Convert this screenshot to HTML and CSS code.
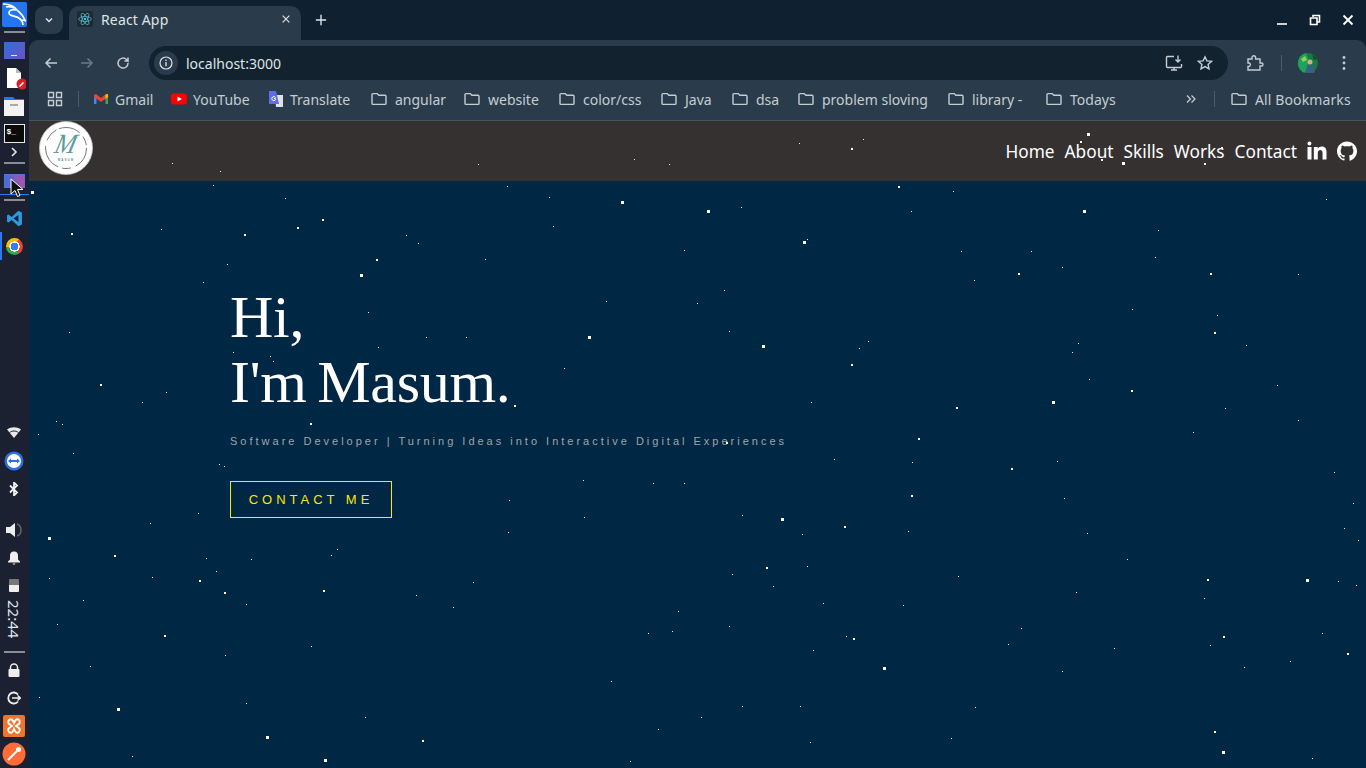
FILE: index.html
```html
<!DOCTYPE html>
<html lang="en">
<head>
<meta charset="utf-8">
<title>React App</title>
<link rel="stylesheet" href="styles.css">
</head>
<body>
<svg class="sprites" aria-hidden="true">
  <symbol id="folder" viewBox="0 0 16 16"><path d="M1 3.600c0-.6.4-1 1-1h4.200l1.600 1.700H14c.6 0 1 .4 1 1v7.100c0 .6-.4 1-1 1H2c-.6 0-1-.4-1-1z" fill="none" stroke="#c5ccd2" stroke-width="1.400"/></symbol>
</svg>
<div class="screen">
  <aside class="dock">
    <div class="dock-group">
      <div class="dock-item"><svg class="i25" viewBox="0 0 25 25"><rect width="25" height="25" rx="2" fill="#2277f0"/><path d="M1 2c6 0 11 2 14 6 3 3 6 5 8 10M15 8c-4-1-8 0-8 3 0 4 9 2 12 7 1 1 2 3 2 5M4 5c3-1 6 0 8 1M19 18c1 0 3 0 5 1" fill="none" stroke="#fff" stroke-width="1.700"/></svg></div>
      <div class="dock-sep"></div>
      <div class="dock-item"><span class="tile-blue"><i></i></span></div>
      <div class="dock-item"><svg class="i24" viewBox="0 0 24 24"><path d="M5 2h9l5 5v15H5z" fill="#fff"/><path d="M14 2l5 5h-5z" fill="#bbb"/><circle cx="20" cy="18" r="5.500" fill="#d81f26"/><path d="M17.500 20.500l4-4" stroke="#fff" stroke-width="1.600"/></svg></div>
      <div class="dock-item"><svg class="i24" viewBox="0 0 24 24"><path d="M2 3h9l2 2h9v4H2z" fill="#1f78e6"/><rect x="2" y="6" width="20" height="16" fill="#f2f2f2"/><rect x="8" y="10" width="8" height="2" fill="#aaa"/></svg></div>
      <div class="dock-item dock-term"><span class="term">$_</span></div>
      <div class="dock-item dock-chev"><svg class="i12" viewBox="0 0 12 12"><path d="M4 2l4 4-4 4" fill="none" stroke="#e8e8e8" stroke-width="1.600"/></svg></div>
      <div class="dock-sep dock-sep-b"></div>
      <div class="dock-item dock-win"><span class="tile-win"></span>
        <svg class="cursor" viewBox="0 0 14 20"><path d="M1 1v15l4-3.500 2.500 6 2.500-1-2.500-6H13z" fill="#111" stroke="#fff"/></svg>
      </div>
      <div class="dock-sep dock-sep-c"></div>
      <div class="dock-item"><svg class="i16" viewBox="0 0 24 24"><path d="M17.500 1L8 10 3.500 6.500 1.500 7.500v9l2 1L8 14l9.500 9 5-2.500v-17zM17.500 7v10L10.500 12z" fill="#2a9be0"/></svg></div>
      <div class="dock-item dock-active"><span class="chrome"></span></div>
    </div>
    <div class="dock-group">
      <div class="dock-item dock-wifi"><svg class="i14" viewBox="0 0 14 14"><path d="M0 3.500C4 .5 10 .5 14 3.500L7 12z" fill="#e8e8e8"/><path d="M2.500 6.500c3-2 6-2 9 0" stroke="#1c2230" fill="none"/></svg></div>
      <div class="dock-item"><svg class="i20" viewBox="0 0 20 20"><circle cx="10" cy="10" r="9.500" fill="#2f6fe0"/><circle cx="10" cy="10" r="7" fill="#fff"/><path d="M4 10l3-2.500V9h6V7.500L16 10l-3 2.500V11H7v1.500z" fill="#2f6fe0"/></svg></div>
      <div class="dock-item"><svg class="i14" viewBox="0 0 14 14"><path d="M3 3.500l7 7L7 13.500V.500l3 3-7 7" fill="none" stroke="#eee" stroke-width="1.800"/></svg></div>
      <div class="dock-item dock-gap"><svg class="i18" viewBox="0 0 18 18"><path d="M1 6h4l5-4v14l-5-4H1z" fill="#eee"/><path d="M12 3c3 1 4 3.500 4 6s-1 5-4 6" fill="none" stroke="#666" stroke-width="1.500"/></svg></div>
      <div class="dock-item"><svg class="i14" viewBox="0 0 14 14"><path d="M7 .5c-3 0-4 2-4 4v4l-2 2v1h12v-1l-2-2v-4c0-2-1-4-4-4zM5.500 12.500h3L7 14z" fill="#eee"/></svg></div>
      <div class="dock-item dock-batt"><span class="battery"></span></div>
      <div class="clock">22:44</div>
      <div class="dock-sep"></div>
      <div class="dock-item"><svg class="i14" viewBox="0 0 14 14"><path d="M3.500 6V4.500a3.500 3.500 0 0 1 7 0V6" fill="none" stroke="#eee" stroke-width="1.500"/><rect x="1.500" y="6" width="11" height="8" rx="1" fill="#eee"/></svg></div>
      <div class="dock-item"><svg class="i14" viewBox="0 0 14 14"><path d="M11 3.500A5.500 5.500 0 1 0 11 10.500" fill="none" stroke="#eee" stroke-width="1.800"/><path d="M5 7h8M10.500 4.500L13.500 7l-3 2.500" fill="none" stroke="#eee" stroke-width="1.500"/></svg></div>
      <div class="dock-item"><svg class="i24" viewBox="0 0 24 24"><rect x="1" y="1" width="22" height="22" rx="2" fill="#f0752a"/><path d="M7 6c3-2 4 1 5 3 1-2 2-5 5-3 3 3-2 5-3 6 1 1 6 3 3 6-3 2-4-1-5-3-1 2-2 5-5 3-3-3 2-5 3-6-1-1-6-3-3-6z" fill="none" stroke="#fff" stroke-width="2"/></svg></div>
      <div class="dock-item"><svg class="i24" viewBox="0 0 24 24"><circle cx="12" cy="12" r="11.500" fill="#ff6c37"/><path d="M6 18l9-9" stroke="#fff" stroke-width="2"/><circle cx="16.500" cy="7.500" r="2.500" fill="#fff"/></svg></div>
    </div>
  </aside>

  <div class="browser">
    <div class="tabstrip">
      <button class="tab-menu"><svg class="i12" viewBox="0 0 12 12"><path d="M3 4.500l3 3 3-3" fill="none" stroke="#dfe4e8" stroke-width="1.500"/></svg></button>
      <div class="tab">
        <span class="react-tile"><svg class="i14" viewBox="-12 -12 24 24"><g fill="none" stroke="#58c4dc" stroke-width="1.200"><ellipse rx="11" ry="4.200"/><ellipse rx="11" ry="4.200" transform="rotate(60)"/><ellipse rx="11" ry="4.200" transform="rotate(120)"/></g><circle r="2" fill="#58c4dc"/></svg></span>
        <span class="tab-title">React App</span>
        <svg class="tab-x" viewBox="0 0 12 12"><path d="M2 2l8 8M10 2l-8 8" stroke="#dfe4e8" stroke-width="1.400"/></svg>
      </div>
      <svg class="tab-plus" viewBox="0 0 14 14"><path d="M7 1v12M1 7h12" stroke="#dfe4e8" stroke-width="1.600"/></svg>
      <div class="win-controls">
        <svg class="i12" viewBox="0 0 12 12"><path d="M1 10h10" stroke="#fff" stroke-width="1.600"/></svg>
        <svg class="i12" viewBox="0 0 12 12"><path d="M4 3V1.500h6.500V8H8.500M1.500 4H8v6.500H1.500z" fill="none" stroke="#fff" stroke-width="1.600"/></svg>
        <svg class="i12" viewBox="0 0 12 12"><path d="M1.500 1.500l9 9M10.500 1.500l-9 9" stroke="#fff" stroke-width="1.800"/></svg>
      </div>
    </div>

    <div class="toolbar">
      <svg class="tool-ic" viewBox="0 0 16 16"><path d="M14 8H3M7.500 3.500L3 8l4.500 4.500" fill="none" stroke="#c5ccd2" stroke-width="1.500"/></svg>
      <svg class="tool-ic tool-dim" viewBox="0 0 16 16"><path d="M2 8h11M8.500 3.500L13 8l-4.500 4.500" fill="none" stroke="#6b7a87" stroke-width="1.500"/></svg>
      <svg class="tool-ic" viewBox="0 0 16 16"><path d="M13 8a5 5 0 1 1-1.500-3.500L13 6V2.500M13 6H9.500" fill="none" stroke="#c5ccd2" stroke-width="1.500"/></svg>
      <div class="omnibox">
        <span class="site-info"><svg class="i14" viewBox="0 0 14 14"><circle cx="7" cy="7" r="6" fill="none" stroke="#dfe4e8" stroke-width="1.200"/><path d="M7 6v4.200M7 3.600v1.400" stroke="#dfe4e8" stroke-width="1.300"/></svg></span>
        <span class="url">localhost:3000</span>
        <svg class="omni-ic" viewBox="0 0 18 18"><path d="M9 2.500H2.500a1 1 0 0 0-1 1v9a1 1 0 0 0 1 1h13a1 1 0 0 0 1-1V10M6 16h6M9 13.500V16" fill="none" stroke="#c5ccd2" stroke-width="1.400"/><path d="M13 1.500V8M10.500 5.500L13 8l2.500-2.500" fill="none" stroke="#c5ccd2" stroke-width="1.400"/></svg>
        <svg class="omni-ic omni-star" viewBox="0 0 16 16"><path d="M8 1.800l1.900 4.100 4.500.5-3.300 3 .9 4.500L8 11.600l-4 2.300.9-4.500-3.300-3 4.500-.5z" fill="none" stroke="#c5ccd2" stroke-width="1.400"/></svg>
      </div>
      <svg class="ext-ic" viewBox="0 0 18 18"><path d="M2 5h4V3.500a1.800 1.800 0 0 1 3.600 0V5h4.400v4h1.500a1.500 1.500 0 0 1 0 3H14v4H2v-3.500h1a1.800 1.800 0 0 0 0-3.500H2z" fill="none" stroke="#c5ccd2" stroke-width="1.400"/></svg>
      <span class="tool-sep"></span>
      <svg class="avatar" viewBox="0 0 20 20"><circle cx="10" cy="10" r="10" fill="#177a45"/><path d="M0 10a10 10 0 0 1 8-10l3 8-4 12a10 10 0 0 1-7-10z" fill="#1fa35a"/><path d="M3 6l4-3 2 4-4 2z" fill="#8fcf5a"/><circle cx="12" cy="9" r="2.500" fill="#c9b089"/><path d="M8 20l1-8h6l2 7a10 10 0 0 1-9 1z" fill="#3c5f86"/><path d="M14 1l5 5-3 1z" fill="#0d4a2c"/></svg>
      <svg class="menu-ic" viewBox="0 0 4 16"><circle cx="2" cy="2.500" r="1.400" fill="#c5ccd2"/><circle cx="2" cy="8" r="1.400" fill="#c5ccd2"/><circle cx="2" cy="13.500" r="1.400" fill="#c5ccd2"/></svg>
    </div>

    <div class="bookmarks">
      <svg class="apps-ic" viewBox="0 0 16 16"><path d="M1.500 1.500h5v5h-5zM9.500 1.500h5v5h-5zM1.500 9.500h5v5h-5zM9.500 9.500h5v5h-5z" fill="none" stroke="#c5ccd2" stroke-width="1.400"/></svg>
      <span class="bm-sep"></span>
      <div class="bm-grid">
        <a class="bm bm-site"><svg class="bm-ic" viewBox="0 0 16 16"><path d="M1 4v9h2.500V7z" fill="#4285f4"/><path d="M15 4v9h-2.500V7z" fill="#34a853"/><path d="M1 4l2-1 5 4 5-4 2 1v2l-7 5-7-5z" fill="#ea4335"/><path d="M12.500 3.500L15 3v3l-2.500 2z" fill="#fbbc04"/></svg>Gmail</a>
        <a class="bm bm-site"><svg class="bm-ic" viewBox="0 0 16 16"><rect y="2.500" width="16" height="11" rx="3" fill="#f00"/><path d="M6.500 5.500L11 8l-4.500 2.500z" fill="#fff"/></svg>YouTube</a>
        <a class="bm bm-site"><svg class="bm-ic" viewBox="0 0 16 16"><path d="M7 4h8v12H8z" fill="#dfe1e5"/><path d="M1 0h7l3 13H1z" fill="#5e6ee6"/><path d="M7.500 6.500a2 2 0 1 0-.2 2.500V7.500H6" fill="none" stroke="#fff" stroke-width="1"/></svg>Translate</a>
        <a class="bm"><svg class="bm-ic"><use href="#folder"/></svg>angular</a>
        <a class="bm"><svg class="bm-ic"><use href="#folder"/></svg>website</a>
        <a class="bm"><svg class="bm-ic"><use href="#folder"/></svg>color/css</a>
        <a class="bm"><svg class="bm-ic"><use href="#folder"/></svg>Java</a>
        <a class="bm"><svg class="bm-ic"><use href="#folder"/></svg>dsa</a>
        <a class="bm"><svg class="bm-ic"><use href="#folder"/></svg>problem sloving</a>
        <a class="bm"><svg class="bm-ic"><use href="#folder"/></svg>library -</a>
        <a class="bm"><svg class="bm-ic"><use href="#folder"/></svg>Todays</a>
      </div>
      <svg class="bm-more" viewBox="0 0 12 12"><path d="M2 2.500L5.500 6 2 9.500M6.500 2.500L10 6 6.500 9.500" fill="none" stroke="#c5ccd2" stroke-width="1.300"/></svg>
      <span class="bm-sep bm-sep-r"></span>
      <a class="bm bm-all"><svg class="bm-ic"><use href="#folder"/></svg>All Bookmarks</a>
    </div>

    <div class="page">
      <nav class="nav">
        <div class="logo">
          <svg class="logo-ring" viewBox="0 0 54 54"><circle cx="27" cy="27" r="26.500" fill="#fff" stroke="#c8c8c8" stroke-width=".8"/><circle cx="27" cy="27" r="20.500" fill="none" stroke="#555" stroke-width=".8" stroke-dasharray="22 5 9 4 26 6 14 3"/></svg>
          <span class="logo-m">M</span>
          <span class="logo-name">MASUM</span>
        </div>
        <div class="nav-links">
          <a class="nav-link">Home</a>
          <a class="nav-link">About</a>
          <a class="nav-link">Skills</a>
          <a class="nav-link">Works</a>
          <a class="nav-link">Contact</a>
          <svg class="nav-ic" viewBox="2.500 2.500 20 20"><path d="M6.940 5a2 2 0 1 1-4-.002 2 2 0 0 1 4 .002zM7 8.480H3V21h4V8.480zm6.320 0H9.340V21h3.940v-6.570c0-3.660 4.770-4 4.770 0V21H22v-7.930c0-6.170-7.060-5.940-8.720-2.910l.040-1.680z" fill="#fff"/></svg>
          <svg class="nav-ic" viewBox="0 0 24 24"><path d="M12 .5C5.370.5 0 5.780 0 12.300c0 5.220 3.440 9.640 8.210 11.200.6.110.82-.26.820-.57v-2c-3.340.72-4.040-1.580-4.040-1.580-.55-1.360-1.330-1.730-1.330-1.730-1.090-.73.080-.71.080-.71 1.200.08 1.840 1.210 1.840 1.210 1.070 1.800 2.810 1.280 3.500.98.110-.77.420-1.290.76-1.580-2.670-.3-5.470-1.310-5.470-5.840 0-1.290.47-2.340 1.240-3.170-.12-.3-.54-1.500.12-3.130 0 0 1.010-.32 3.300 1.210.96-.26 1.980-.39 3-.39s2.040.13 3 .39c2.280-1.530 3.290-1.210 3.290-1.210.66 1.630.24 2.830.12 3.130.77.830 1.230 1.880 1.230 3.170 0 4.540-2.810 5.540-5.480 5.830.43.370.82 1.100.82 2.210v3.280c0 .32.22.69.82.57C20.570 21.930 24 17.520 24 12.300 24 5.780 18.630.5 12 .5z" fill="#fff"/></svg>
        </div>
      </nav>
      <main class="hero">
        <h1 class="hero-title">Hi,<br>I'm Masum.</h1>
        <p class="hero-sub">Software Developer | Turning Ideas into Interactive Digital Experiences</p>
        <a class="hero-btn">CONTACT ME</a>
      </main>
    </div>
  </div>
</div>
<svg class="stars" viewBox="0 0 1366 768" aria-hidden="true">
  <g class="stars-row">
    <path class="star-s" d="M172 163h1M220 171h1M478 164h1M213 185h1M285 198h1M161 229h1M227 264h1M203 282h1M406 235h1M418 243h1M368 312h1M69 332h1M426 337h1M466 337h1M378 347h1M233 352h1M270 356h1M273 361h1M166 392h1M142 402h1M56 421h1M62 424h1M38 434h1M634 159h1M669 164h1M799 143h1M863 139h1M507 186h1M549 197h1M553 226h1M741 207h1M911 211h1M807 239h1M485 259h1M684 250h1M724 290h1M697 303h1M606 301h1M729 331h1M868 341h1M859 348h1M564 368h1M811 402h1M953 191h1M1326 199h1M1158 230h1M961 251h1M1031 251h1M1155 257h1M1062 267h1M1298 274h1M974 280h1M1132 309h1M1217 315h1M1078 343h1M1072 352h1M1246 345h1M1089 379h1M1277 385h1M1225 408h1M1298 420h1M1193 432h1M73 453h1M219 464h1M224 466h1M198 513h1M150 523h1M206 558h1M251 559h1M216 571h1M337 549h1M331 555h1M49 578h1M152 577h1M83 600h1M246 604h1M57 624h1M416 595h1M453 607h1M473 582h1M311 646h1M225 655h1M90 666h1M39 697h1M246 703h1M365 717h1M132 756h1M834 459h1M912 462h1M583 480h1M653 483h1M684 483h1M509 500h1M742 515h1M584 517h1M508 532h1M802 534h1M908 531h1M807 566h1M732 574h1M773 586h1M823 603h1M903 605h1M678 611h1M729 626h1M672 631h1M648 633h1M846 636h1M813 650h1M611 681h1M742 706h1M800 706h1M701 717h1M658 729h1M810 742h1M630 761h1M1057 461h1M1334 472h1M1064 498h1M1353 503h1M1087 533h1M1344 528h1M1358 540h1M1127 559h1M958 576h1M1338 581h1M1356 585h1M1204 598h1M1076 592h1M1322 633h1M1021 628h1M1008 644h1M1114 648h1M1210 645h1M1290 661h1M1244 667h1M1062 671h1M975 707h1M951 738h1M1312 758h1"/>
    <path class="star-l" d="M31 192h3M360 275h3M621 202h3M707 211h3M803 242h3M588 337h3M762 346h3M1087 134h3M1122 163h3M1083 211h3M1052 402h3M48 538h3M117 709h3M266 737h3M324 760h3M781 519h3M883 668h3M1306 580h3M1222 752h3"/>
  </g>
  <path class="star-m" d="M71 234h2M244 235h2M297 228h2M322 220h2M376 260h2M100 385h2M310 424h2M851 149h2M898 187h2M851 365h2M514 406h2M918 439h2M726 443h2M1080 142h2M1101 160h2M1204 164h2M1221 148h2M1018 274h2M1210 274h2M1214 333h2M1131 391h2M956 408h2M114 556h2M199 581h2M224 593h2M323 591h2M164 636h2M422 741h2M911 496h2M844 527h2M766 568h2M853 639h2M1011 469h2M1207 580h2M1223 637h2M1347 654h2M1214 732h2"/>
</svg>
</body>
</html>
```
FILE: styles.css
```css
* { box-sizing: border-box; }
html, body { margin: 0; height: 100%; overflow: hidden; background: #002744; }
body { font-family: "Noto Sans", "Open Sans", sans-serif; color: #fff; position: relative; }
svg { display: block; flex: none; }
a { color: inherit; text-decoration: none; }
.sprites { width: 0; height: 0; position: absolute; }
.i12 { width: 12px; height: 12px; }
.i14 { width: 14px; height: 14px; }
.i16 { width: 17px; height: 17px; }
.i18 { width: 18px; height: 18px; }
.i20 { width: 20px; height: 20px; }
.i24 { width: 24px; height: 24px; }
.i25 { width: 25px; height: 25px; }

.screen { display: flex; width: 1366px; height: 768px; }

/* left dock */
.dock { width: 29px; flex: none; background: #1b2130; display: flex; flex-direction: column; justify-content: space-between; }
.dock-item { height: 28px; display: flex; align-items: center; justify-content: center; position: relative; padding-right: 1px; }
.dock-sep { height: 8px; display: flex; align-items: center; padding: 0 4px; }
.dock-sep::before { content: ""; flex: 1; height: 2px; background: #8a8d94; }
.dock-term { height: 26px; }
.dock-chev { height: 12px; }
.dock-sep-b { height: 10px; }
.dock-win { height: 27px; border-bottom: 1px solid #2a7bf0; }
.dock-sep-c { height: 9px; }
.dock-active { box-shadow: inset 2px 0 0 #2a7bf0; }
.dock-wifi { height: 29px; }
.dock-gap { margin-top: 13px; }
.dock-batt { height: 26px; }
.tile-blue { width: 21px; height: 17px; background: linear-gradient(135deg, #2f6fd8, #6a52c8); display: flex; align-items: flex-end; justify-content: center; padding-bottom: 3px; }
.tile-blue i { width: 6px; height: 1px; background: #dfe4ff; }
.term { width: 21px; height: 19px; background: #0b0b0b; border: 1px solid #e8e8e8; font: bold 8px/13px "Liberation Mono", monospace; color: #fff; padding-left: 2px; }
.tile-win { width: 21px; height: 14px; background: linear-gradient(90deg, #3d6fe0, #b04fa8); border: 1px solid #5a6fd0; }
.cursor { position: absolute; left: 10px; top: 10px; width: 14px; height: 20px; }
.chrome { width: 17px; height: 17px; border-radius: 50%; background: radial-gradient(circle, #3b7de8 0 30%, #fff 31% 42%, transparent 43%), conic-gradient(from 30deg, #ea4335 0 120deg, #34a853 120deg 240deg, #fbbc04 240deg 360deg); }
.battery { width: 10px; height: 13px; background: linear-gradient(#777 0 45%, #eee 45%); border-radius: 1px; }
.clock { writing-mode: vertical-rl; font-size: 15px; line-height: 28px; height: 42px; margin-bottom: 8px; text-align: center; color: #dfe6ee; }

/* browser chrome */
.browser { flex: 1; display: flex; flex-direction: column; min-width: 0; background: #0f2130; }
.tabstrip { height: 40px; display: flex; align-items: flex-start; padding-left: 6px; flex: none; }
.tab-menu { width: 28px; height: 28px; margin-top: 6px; border: 0; padding: 0; border-radius: 9px; background: #2a3c4b; display: flex; align-items: center; justify-content: center; }
.tab { width: 232px; height: 34px; margin: 6px 0 0 6px; background: #2a3c4b; border-radius: 10px 10px 0 0; display: flex; align-items: center; padding: 0 10px 8px 8px; font-size: 14px; letter-spacing: .15px; color: #dfe4e8; }
.react-tile { width: 16px; height: 16px; background: #1e2a30; border-radius: 2px; display: flex; align-items: center; justify-content: center; margin-right: 8px; }
.tab-title { flex: 1; }
.tab-x { width: 10px; height: 10px; }
.tab-plus { width: 12px; height: 12px; margin: 14px 0 0 14px; }
.win-controls { margin-left: auto; display: flex; gap: 21px; padding: 14px 12px 0 0; }
.toolbar { height: 41px; flex: none; background: #2a3c4b; border-radius: 9px 9px 0 0; display: flex; align-items: center; padding: 5px 0 0 14px; }
.tool-ic { width: 16px; height: 16px; margin-right: 20px; }
.omnibox { width: 1079px; height: 34px; margin-left: -2px; border-radius: 17px; background: #12232f; display: flex; align-items: center; padding: 0 15px 0 5px; }
.site-info { width: 24px; height: 24px; border-radius: 50%; background: #2a3c4b; display: flex; align-items: center; justify-content: center; }
.url { flex: 1; margin-left: 8px; font-size: 14px; color: #dfe4e8; }
.omni-ic { width: 18px; height: 18px; }
.omni-star { width: 16px; height: 16px; margin-left: 14px; }
.ext-ic { width: 18px; height: 18px; margin-left: 18px; }
.tool-sep { width: 1px; height: 16px; background: #4a5b69; margin-left: 17px; }
.avatar { width: 20px; height: 20px; margin-left: 16px; }
.menu-ic { width: 4px; height: 16px; margin-left: 24px; }
.bookmarks { height: 40px; flex: none; background: #2a3c4b; border-bottom: 1px solid #46555f; display: flex; align-items: center; padding: 0 0 3px 18px; font-size: 14px; color: #c5ccd2; }
.apps-ic { width: 16px; height: 16px; }
.bm-sep { width: 1px; height: 16px; background: #4a5b69; margin-left: 15px; }
.bm-grid { display: grid; grid-template-columns: 78px 97px 103px 93px 95px 102px 71px 66px 150px 98px 100px; margin-left: 14px; }
.bm { display: flex; align-items: center; gap: 8px; white-space: nowrap; }
.bm-site { gap: 6px; }
.bm-ic { width: 16px; height: 16px; }
.bm-more { width: 12px; height: 12px; margin-left: 39px; }
.bm-sep-r { margin-left: 17px; }
.bm-all { margin-left: 16px; letter-spacing: .12px; }
.page { flex: 1; display: flex; flex-direction: column; min-height: 0; }
.nav { height: 60px; flex: none; background: #353131; display: flex; justify-content: space-between; padding: 0 9px 0 10px; }
.logo { width: 54px; height: 54px; position: relative; color: #5f9c9c; }
.logo-ring { width: 54px; height: 54px; }
.logo-m { position: absolute; left: 0; right: 0; top: 9px; text-align: center; font: italic 28px/27px "Liberation Serif", serif; transform: skewX(-14deg) scaleX(.9); }
.logo-name { position: absolute; left: 0; right: 0; top: 37px; text-align: center; font: bold 3px/4px "Liberation Sans", sans-serif; letter-spacing: 1px; }
.nav-links { display: flex; align-items: center; gap: 10px; font-size: 17.25px; }
.nav-ic { width: 20px; height: 20px; }
.hero { flex: 1; background: #002744; padding: 104px 0 0 201px; }
.hero-title { margin: 0; font: 400 60px/65px "Liberation Serif", serif; letter-spacing: -.3px; word-spacing: -4px; color: #fff; }
.hero-sub { margin: 19px 0 0; font: 11px/14px "Liberation Sans", sans-serif; letter-spacing: 3px; color: #a0a4a8; }
.hero-btn { display: inline-block; width: 162px; height: 37px; margin-top: 33px; border: 1px solid #ffea00; font: 13px/35px "Liberation Sans", sans-serif; letter-spacing: 4px; color: #ffe600; text-align: center; }

/* stars */
.stars { position: absolute; left: 0; top: 0; width: 1366px; height: 768px; pointer-events: none; shape-rendering: crispEdges; }
.stars-row { transform: translateY(.5px); }
.star-s { stroke: #e6edf2; stroke-width: 1; fill: none; }
.star-m { stroke: #fff; stroke-width: 2; fill: none; }
.star-l { stroke: #fff; stroke-width: 3; fill: none; }
```
